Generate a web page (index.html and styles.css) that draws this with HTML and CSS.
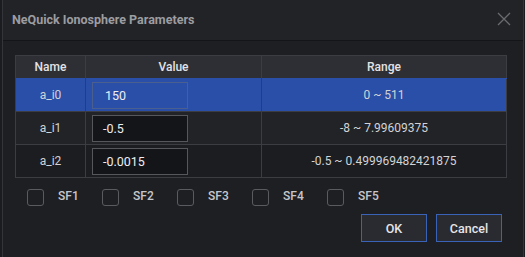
FILE: index.html
```html
<!DOCTYPE html>
<html lang="en">
  <head>
    <meta charset="UTF-8" />
    <title>NeQuick Ionosphere Parameters</title>
    <link rel="stylesheet" href="styles.css">
  </head>
  <body>
    <div class="dialog">
      <!-- title bar -->
      <div class="title-bar">
        <span class="title">NeQuick Ionosphere Parameters</span>
        <svg class="close" width="14" height="14" viewBox="0 0 14 14">
          <path d="M1 1 L13 13 M13 1 L1 13" stroke="#6a6b70" stroke-width="1.3" fill="none" />
        </svg>
      </div>

      <div class="body">
        <table class="params">
          <thead>
            <tr>
              <th class="col-name">Name</th>
              <th class="col-value">Value</th>
              <th>Range</th>
            </tr>
          </thead>
          <tbody>
            <tr class="selected">
              <td>a_i0</td>
              <td class="value"><div class="input">150</div></td>
              <td>0 ~ 511</td>
            </tr>
            <tr>
              <td>a_i1</td>
              <td class="value"><div class="input">-0.5</div></td>
              <td>-8 ~ 7.99609375</td>
            </tr>
            <tr class="alt">
              <td>a_i2</td>
              <td class="value"><div class="input">-0.0015</div></td>
              <td>-0.5 ~ 0.499969482421875</td>
            </tr>
          </tbody>
        </table>

        <!-- SF checkboxes -->
        <div class="flags">
          <label class="flag"><span class="box"></span>SF1</label>
          <label class="flag"><span class="box"></span>SF2</label>
          <label class="flag"><span class="box"></span>SF3</label>
          <label class="flag"><span class="box"></span>SF4</label>
          <label class="flag"><span class="box"></span>SF5</label>
        </div>

        <div class="buttons">
          <button class="btn">OK</button>
          <button class="btn">Cancel</button>
        </div>
      </div>
    </div>
  </body>
</html>
```

FILE: styles.css
```css
body {
  margin: 0;
  background: #1b1c20;
  font-family: Roboto, "Liberation Sans", sans-serif;
  font-size: 12px;
  color: #d2d3d6;
  height: 257px;
  overflow: hidden;
}

.dialog {
  margin: 0 1px 0 2px;
  height: 257px;
  box-sizing: border-box;
  border-left: 1px solid #34353a;
  border-right: 1px solid #34353a;
  background: #1e1f23;
}

.title-bar {
  height: 40px;
  display: flex;
  align-items: center;
  justify-content: space-between;
  padding: 0 12px 0 9px;
  background: #222327;
  border-bottom: 1px solid #141518;
}

.title {
  font-weight: bold;
  color: #9c9da1;
  font-size: 12.5px;
  margin-top: -2px;
}

.close {
  margin-top: -2px;
}

.body {
  padding: 14px 16px 0 12px;
}

.params {
  width: 100%;
  border-collapse: collapse;
  border: 1px solid #3c3d42;
}

.params th {
  height: 22px;
  background: #2e2f34;
  font-weight: 500;
  color: #e2e3e6;
  border-left: 1px solid #3c3d42;
  padding: 0;
}

.params th.col-name {
  width: 69px;
}

.params th.col-value {
  width: 175px;
}

.params td {
  height: 32px;
  padding: 0;
  text-align: center;
  background: #222327;
  border-left: 1px solid #3c3d42;
  border-top: 1px solid #3c3d42;
}

.params tr.alt td {
  background: #1c1d21;
}

.params tr.selected td {
  background: #2a4fa8;
  border-top-color: #2a4fa8;
}

.params td.value {
  text-align: left;
  padding-left: 6px;
}

.input {
  width: 96px;
  height: 27px;
  box-sizing: border-box;
  border: 1px solid #56575c;
  background: #141518;
  color: #eceef2;
  line-height: 25px;
  padding-left: 10px;
  font-size: 12.5px;
}

.selected .input {
  background: #2a4fa8;
  border-color: #4a5f90;
  padding-left: 12px;
}

.flags {
  display: flex;
  padding: 11px 0 0 12px;
}

.flag {
  width: 75px;
  display: flex;
  align-items: flex-start;
  font-weight: 500;
  color: #c6c7cb;
}

.box {
  width: 17px;
  height: 17px;
  box-sizing: border-box;
  border: 1px solid #5a5b60;
  border-radius: 3px;
  margin: 0 14px 0 0;
}

.buttons {
  display: flex;
  justify-content: flex-end;
  gap: 9px;
  padding: 8px 5px 0 0;
}

.btn {
  width: 66px;
  height: 28px;
  background: #2a2b31;
  border: 1px solid #3a62b6;
  color: #e4e5e8;
  font-family: Roboto, "Liberation Sans", sans-serif;
  font-size: 12.5px;
  font-weight: 500;
  padding: 0;
}
```
